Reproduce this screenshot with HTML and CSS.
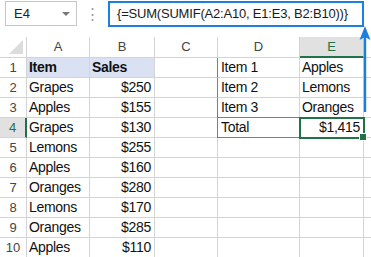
FILE: index.html
```
<!DOCTYPE html>
<html lang="en">
<head>
  <meta charset="UTF-8">
  <title>SUMIF array formula</title>
  <link rel="stylesheet" href="styles.css">
</head>
<body>

<div class="sheet">
  <div class="formula-row">
    <div class="name-box">
      <span>E4</span>
      <span class="caret"></span>
    </div>
    <div class="dots">⋮</div>
    <div class="formula-box">{=SUM(SUMIF(A2:A10, E1:E3, B2:B10))}</div>
  </div>

  <div class="grid">
    <div class="corner"><span class="tri"></span></div>
    <div class="col-head">A</div>
    <div class="col-head">B</div>
    <div class="col-head">C</div>
    <div class="col-head">D</div>
    <div class="col-head active">E</div>
    <div class="col-head last"></div>

    <div class="row-head">1</div>
    <div class="cell hl bold">Item</div>
    <div class="cell hl bold">Sales</div>
    <div class="cell"></div>
    <div class="cell tbl-left">Item 1</div>
    <div class="cell">Apples</div>
    <div class="cell last"></div>

    <div class="row-head">2</div>
    <div class="cell">Grapes</div>
    <div class="cell num">$250</div>
    <div class="cell"></div>
    <div class="cell tbl-left">Item 2</div>
    <div class="cell">Lemons</div>
    <div class="cell last"></div>

    <div class="row-head">3</div>
    <div class="cell">Apples</div>
    <div class="cell num">$155</div>
    <div class="cell"></div>
    <div class="cell tbl-left tbl-bottom">Item 3</div>
    <div class="cell">Oranges</div>
    <div class="cell last"></div>

    <div class="row-head active">4</div>
    <div class="cell">Grapes</div>
    <div class="cell num">$130</div>
    <div class="cell"></div>
    <div class="cell tbl-left tbl-bottom">Total</div>
    <div class="cell num selected">$1,415<span class="handle"></span></div>
    <div class="cell last"></div>

    <div class="row-head">5</div>
    <div class="cell">Lemons</div>
    <div class="cell num">$255</div>
    <div class="cell"></div>
    <div class="cell"></div>
    <div class="cell"></div>
    <div class="cell last"></div>

    <div class="row-head">6</div>
    <div class="cell">Apples</div>
    <div class="cell num">$160</div>
    <div class="cell"></div>
    <div class="cell"></div>
    <div class="cell"></div>
    <div class="cell last"></div>

    <div class="row-head">7</div>
    <div class="cell">Oranges</div>
    <div class="cell num">$280</div>
    <div class="cell"></div>
    <div class="cell"></div>
    <div class="cell"></div>
    <div class="cell last"></div>

    <div class="row-head">8</div>
    <div class="cell">Lemons</div>
    <div class="cell num">$170</div>
    <div class="cell"></div>
    <div class="cell"></div>
    <div class="cell"></div>
    <div class="cell last"></div>

    <div class="row-head">9</div>
    <div class="cell">Oranges</div>
    <div class="cell num">$285</div>
    <div class="cell"></div>
    <div class="cell"></div>
    <div class="cell"></div>
    <div class="cell last"></div>

    <div class="row-head">10</div>
    <div class="cell">Apples</div>
    <div class="cell num">$110</div>
    <div class="cell"></div>
    <div class="cell"></div>
    <div class="cell"></div>
    <div class="cell last"></div>
  </div>

  <!-- arrow from the result cell up to the formula bar -->
  <svg class="arrow" width="12" height="86" viewBox="0 0 12 86">
    <path d="M6 10 V86" stroke="#1e7ee0" stroke-width="2.4" fill="none"/>
    <path d="M6 0 L11.5 14 L6 11 L0.5 14 Z" fill="#1e7ee0"/>
  </svg>
</div>

</body>
</html>
```

FILE: styles.css
```
body {
  margin: 0;
  background: #fff;
  font-family: "Liberation Sans", Arial, sans-serif;
  color: #111;
}

.sheet {
  position: relative;
  width: 371px;
  height: 257px;
  overflow: hidden;
}

/* formula bar */

.formula-row {
  display: flex;
  align-items: flex-start;
  height: 37px;
  padding-top: 1px;
  box-sizing: border-box;
}

.name-box {
  margin-left: 5px;
  width: 72px;
  height: 25px;
  border: 1px solid #c6c6c6;
  box-sizing: border-box;
  display: flex;
  align-items: center;
  justify-content: space-between;
  padding: 0 6px 0 8px;
  font-size: 13px;
  color: #222;
}

.caret {
  width: 0;
  height: 0;
  border-left: 4px solid transparent;
  border-right: 4px solid transparent;
  border-top: 4px solid #777;
}

.dots {
  width: 31px;
  text-align: center;
  line-height: 25px;
  font-size: 15px;
  color: #9a9a9a;
}

.formula-box {
  width: 256px;
  height: 26px;
  border: 2px solid #1e7ee0;
  box-sizing: border-box;
  padding-left: 7px;
  font-size: 13px;
  letter-spacing: -0.2px;
  line-height: 21px;
  color: #1a1a1a;
  white-space: nowrap;
}

/* grid */

.grid {
  display: grid;
  grid-template-columns: 27px 63px 65px 63px 82px 64px 8px;
  grid-template-rows: 21px repeat(10, 20px);
}

.grid > div {
  box-sizing: border-box;
  border-right: 1px solid #d4d4d4;
  border-bottom: 1px solid #d4d4d4;
  white-space: nowrap;
  overflow: hidden;
}

.corner {
  position: relative;
}

.tri {
  position: absolute;
  right: 3px;
  bottom: 3px;
  width: 0;
  height: 0;
  border-left: 14px solid transparent;
  border-bottom: 14px solid #dcdcdc;
}

.col-head {
  font-size: 13px;
  color: #444;
  text-align: center;
  line-height: 20px;
}

.col-head.active {
  background: #e1e1e1;
  color: #217346;
  border-bottom: 2px solid #217346 !important;
  line-height: 19px;
}

.row-head {
  font-size: 13px;
  color: #444;
  text-align: center;
  line-height: 19px;
}

.row-head.active {
  background: #e1e1e1;
  color: #217346;
  border-right: 2px solid #217346 !important;
}

.grid > .last {
  border-right: none;
}

.cell {
  font-size: 14px;
  letter-spacing: -0.3px;
  line-height: 19px;
  padding: 0 3px 0 2px;
  color: #111;
}

.num {
  text-align: right;
}

.hl {
  background: #d9e1f2;
}

.bold {
  font-weight: bold;
}

.grid > .tbl-left {
  border-left: 1px solid #7f7f7f;
  margin-left: -1px;
  padding-left: 3px;
}

.grid > .tbl-bottom {
  border-bottom: 1px solid #7f7f7f;
}

.grid > .selected {
  position: relative;
  overflow: visible;
  outline: 2px solid #217346;
  outline-offset: -1px;
  z-index: 1;
}

.handle {
  position: absolute;
  right: -4px;
  bottom: -4px;
  width: 6px;
  height: 6px;
  background: #217346;
  border: 1px solid #fff;
}

.arrow {
  position: absolute;
  left: 359px;
  top: 26px;
}
```
